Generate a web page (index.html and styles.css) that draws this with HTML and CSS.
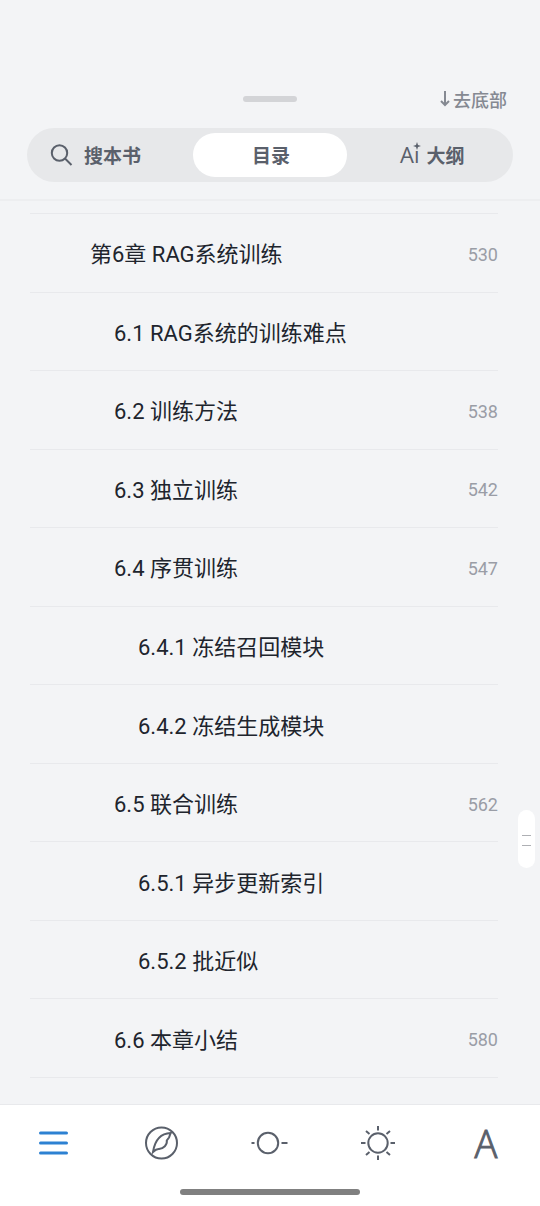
FILE: index.html
```html
<!DOCTYPE html>
<html lang="zh-CN">
<head>
    <meta charset="UTF-8">
    <meta name="viewport" content="width=device-width, initial-scale=1.0">
    <title>目录</title>
    <link rel="stylesheet" href="styles.css">
</head>
<body>
    <header class="header">
        <div class="top-row">
            <span class="handle"></span>
            <button class="to-bottom" type="button">
                <svg width="12" height="18" viewBox="0 0 12 18"><path d="M6 1v14M2 11l4 4 4-4"/></svg>
                去底部
            </button>
        </div>
        <div class="tabs">
            <button class="tab search" type="button">
                <svg width="24" height="24" viewBox="0 0 24 24"><circle cx="9.500" cy="11" r="7.700"/><path d="M15 16.500l6.500 6.500"/></svg>
                搜本书
            </button>
            <button class="tab active" type="button">目录</button>
            <button class="tab" type="button">
                <span class="ai-icon">Aı<svg width="8" height="8" viewBox="0 0 8 8"><path d="M4 0l1 3 3 1-3 1-1 3-1-3-3-1 3-1z"/></svg></span>
                大纲
            </button>
        </div>
    </header>

    <main class="content">
        <ul class="toc">
            <li><a class="item level-1" href="#c6"><span>第6章 RAG系统训练</span><span class="page">530</span></a></li>
            <li><a class="item level-2" href="#c6-1"><span>6.1 RAG系统的训练难点</span></a></li>
            <li><a class="item level-2" href="#c6-2"><span>6.2 训练方法</span><span class="page">538</span></a></li>
            <li><a class="item level-2" href="#c6-3"><span>6.3 独立训练</span><span class="page">542</span></a></li>
            <li><a class="item level-2" href="#c6-4"><span>6.4 序贯训练</span><span class="page">547</span></a></li>
            <li><a class="item level-3" href="#c6-4-1"><span>6.4.1 冻结召回模块</span></a></li>
            <li><a class="item level-3" href="#c6-4-2"><span>6.4.2 冻结生成模块</span></a></li>
            <li><a class="item level-2" href="#c6-5"><span>6.5 联合训练</span><span class="page">562</span></a></li>
            <li><a class="item level-3" href="#c6-5-1"><span>6.5.1 异步更新索引</span></a></li>
            <li><a class="item level-3" href="#c6-5-2"><span>6.5.2 批近似</span></a></li>
            <li><a class="item level-2" href="#c6-6"><span>6.6 本章小结</span><span class="page">580</span></a></li>
        </ul>
        <button class="scroll-thumb" type="button" aria-label="滚动"></button>
    </main>

    <footer class="footer">
        <nav class="nav">
            <button class="nav-btn current" type="button" aria-label="目录">
                <svg width="36" height="36" viewBox="0 0 36 36"><path d="M4.500 8h26M4.500 18h26M4.500 28h26"/></svg>
            </button>
            <button class="nav-btn" type="button" aria-label="发现">
                <svg width="36" height="36" viewBox="0 0 36 36"><circle cx="17.500" cy="18" r="15.500"/><path d="M9 27C10.500 17 15.500 8.500 26.800 8C25.800 9.500 25.800 11 25 12.500L22.800 15.500C23.500 20 19.500 23.500 15 24C12.500 23.800 10.500 25.500 9 27z"/></svg>
            </button>
            <button class="nav-btn" type="button" aria-label="进度">
                <svg width="36" height="36" viewBox="0 0 36 36"><circle cx="16" cy="18" r="10.200"/><path d="M-.500 18h3M29.500 18h6"/></svg>
            </button>
            <button class="nav-btn" type="button" aria-label="亮度">
                <svg width="36" height="36" viewBox="0 0 36 36"><circle cx="18" cy="18" r="9.700"/><path d="M18 1v4.500M18 30.500v4.500M1 18h4.500M30.500 18h4.500M6 6l3.500 3M30 6l-3.500 3M6 30l3.500-3M30 30l-3.500-3"/></svg>
            </button>
            <button class="nav-btn font" type="button" aria-label="字体">A</button>
        </nav>
        <div class="home-bar"></div>
    </footer>
</body>
</html>
```
FILE: styles.css
```css
* {
    box-sizing: border-box;
}
body {
    margin: 0;
    min-height: 100vh;
    display: flex;
    flex-direction: column;
    background-color: #f3f4f6;
    color: #20242d;
    font-family: Roboto, "Noto Sans CJK SC", sans-serif;
}
button {
    margin: 0;
    padding: 0;
    border: none;
    background: none;
    font-family: inherit;
    color: #5a606b;
    cursor: pointer;
}
svg {
    fill: none;
    stroke: currentColor;
    stroke-width: 2;
}
.header {
    padding: 84px 27px 17px;
    border-bottom: 2px solid #edeef0;
}
.top-row {
    display: grid;
    grid-template-columns: 1fr auto 1fr;
    align-items: center;
    height: 29px;
    margin-bottom: 15px;
}
.handle {
    grid-column: 2;
    width: 54px;
    height: 6px;
    border-radius: 3px;
    background: #d3d4d7;
}
.to-bottom {
    display: flex;
    align-items: center;
    justify-self: end;
    gap: 2px;
    margin-right: 6px;
    font-size: 18px;
    font-weight: 500;
    color: #858992;
}
.tabs {
    display: grid;
    grid-template-columns: repeat(3, 1fr);
    gap: 8px;
    height: 54px;
    padding: 5px;
    border-radius: 27px;
    background: #e7e8ea;
}
.tab {
    display: flex;
    align-items: center;
    justify-content: center;
    gap: 7px;
    padding: 0 0 2px 2px;
    border-radius: 22px;
    font-size: 19px;
    font-weight: 700;
}
.tab.search {
    justify-content: flex-start;
    gap: 10px;
    padding-left: 18px;
}
.tab.active {
    background: #fff;
}
.ai-icon {
    position: relative;
    font-family: "Open Sans", sans-serif;
    font-size: 22px;
    font-weight: 500;
    line-height: 24px;
}
.ai-icon svg {
    position: absolute;
    top: 0;
    right: -1px;
    fill: currentColor;
    stroke: none;
}
.content {
    position: relative;
    flex: 1;
    display: flex;
    padding: 12px 42px 26px 30px;
}
.toc {
    flex: 1;
    display: grid;
    grid-auto-rows: minmax(72px, 1fr);
    margin: 0;
    padding: 0;
    list-style: none;
    border-top: 1px solid #e8e9ec;
}
.toc li {
    display: flex;
    border-bottom: 1px solid #e8e9ec;
}
.item {
    flex: 1;
    display: flex;
    align-items: center;
    justify-content: space-between;
    padding-bottom: 1px;
    color: inherit;
    font-size: 22px;
    text-decoration: none;
}
.level-1 {
    padding-left: 60px;
}
.level-2 {
    padding-left: 84px;
}
.level-3 {
    padding-left: 108px;
}
.page {
    padding-top: 4px;
    font-size: 18px;
    color: #9a9da6;
}
.scroll-thumb {
    position: absolute;
    right: 5px;
    bottom: 236px;
    width: 17px;
    height: 58px;
    border-radius: 9px;
    background: #fff;
}
.scroll-thumb::before {
    content: "";
    display: block;
    width: 9px;
    height: 9px;
    margin: 2px auto 0;
    border-top: 1px solid #aeb0b4;
    border-bottom: 1px solid #aeb0b4;
}
.footer {
    height: 102px;
    border-top: 1px solid #e8e9ec;
    background: #fff;
}
.nav {
    display: grid;
    grid-template-columns: repeat(5, 1fr);
    height: 76px;
}
.nav-btn {
    display: flex;
    align-items: center;
    justify-content: center;
}
.nav-btn svg {
    overflow: visible;
}
.nav-btn.current {
    color: #2d81d2;
}
.nav-btn.current svg {
    stroke-width: 3;
    stroke-linecap: round;
}
.nav-btn.font {
    font-family: "Open Sans", sans-serif;
    font-size: 38px;
    font-weight: 300;
    line-height: 40px;
    -webkit-text-stroke: 1px currentColor;
}
.home-bar {
    width: 180px;
    height: 6px;
    margin: 8px auto 0;
    border-radius: 3px;
    background: #808080;
}
```
